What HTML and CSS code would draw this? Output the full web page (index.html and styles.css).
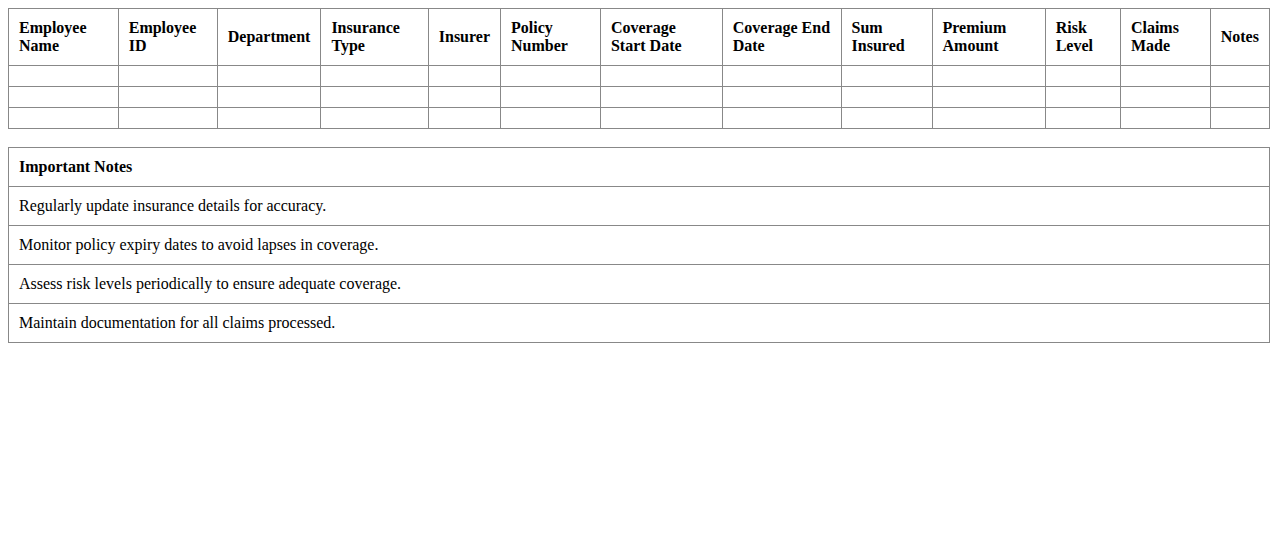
FILE: index.html
```html
<!DOCTYPE html>
<html>
<head>
<meta charset="utf-8">
<title>Employee Insurance</title>
<link rel="stylesheet" href="styles.css">
</head>
<body>
<table class="grid">
  <thead>
    <tr>
      <th>Employee Name</th>
      <th>Employee ID</th>
      <th>Department</th>
      <th>Insurance Type</th>
      <th>Insurer</th>
      <th>Policy Number</th>
      <th>Coverage Start Date</th>
      <th>Coverage End Date</th>
      <th>Sum Insured</th>
      <th>Premium Amount</th>
      <th>Risk Level</th>
      <th>Claims Made</th>
      <th>Notes</th>
    </tr>
  </thead>
  <tbody>
    <tr><td></td><td></td><td></td><td></td><td></td><td></td><td></td><td></td><td></td><td></td><td></td><td></td><td></td></tr>
    <tr><td></td><td></td><td></td><td></td><td></td><td></td><td></td><td></td><td></td><td></td><td></td><td></td><td></td></tr>
    <tr><td></td><td></td><td></td><td></td><td></td><td></td><td></td><td></td><td></td><td></td><td></td><td></td><td></td></tr>
  </tbody>
</table>
<table class="grid notes">
  <thead>
    <tr><th>Important Notes</th></tr>
  </thead>
  <tbody>
    <tr><td>Regularly update insurance details for accuracy.</td></tr>
    <tr><td>Monitor policy expiry dates to avoid lapses in coverage.</td></tr>
    <tr><td>Assess risk levels periodically to ensure adequate coverage.</td></tr>
    <tr><td>Maintain documentation for all claims processed.</td></tr>
  </tbody>
</table>
</body>
</html>
```
FILE: styles.css
```css
body {
  margin: 8px;
  font-family: "Liberation Serif", "Times New Roman", serif;
  font-size: 16px;
  color: #000;
  background: #fff;
}
.grid {
  width: 100%;
  border-collapse: collapse;
  margin-bottom: 18px;
}
.grid th,
.grid td {
  border: 1px solid #888;
  padding: 10px;
  text-align: left;
  vertical-align: middle;
  line-height: 18px;
}
.grid th {
  font-weight: bold;
}
.notes td {
  font-weight: normal;
}
```
